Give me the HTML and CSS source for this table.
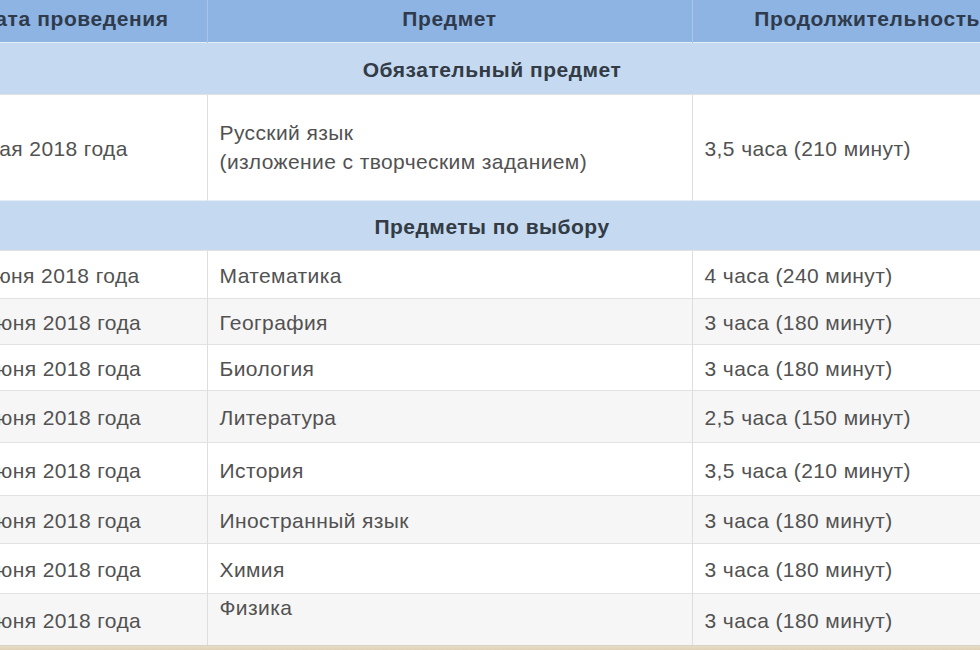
FILE: index.html
```html
<!DOCTYPE html>
<html lang="ru">
<head>
<meta charset="utf-8">
<title>Расписание экзаменов</title>
<link rel="stylesheet" href="styles.css">
</head>
<body>
<div class="frame">
  <table class="schedule">
    <colgroup>
      <col class="c-date">
      <col class="c-subj">
      <col class="c-dur">
    </colgroup>
    <thead>
      <tr class="head">
        <th>Дата проведения</th>
        <th>Предмет</th>
        <th>Продолжительность</th>
      </tr>
    </thead>
    <tbody>
      <tr class="section s1"><td colspan="3">Обязательный предмет</td></tr>
      <tr class="tall">
        <td>31 мая 2018 года</td>
        <td class="two">Русский язык<br>(изложение с творческим заданием)</td>
        <td>3,5 часа (210 минут)</td>
      </tr>
      <tr class="section s2"><td colspan="3">Предметы по выбору</td></tr>
      <tr class="r48"><td>11 июня 2018 года</td><td>Математика</td><td>4 часа (240 минут)</td></tr>
      <tr class="r46 alt"><td>13 июня 2018 года</td><td>География</td><td>3 часа (180 минут)</td></tr>
      <tr class="r46"><td>13 июня 2018 года</td><td>Биология</td><td>3 часа (180 минут)</td></tr>
      <tr class="r52 alt"><td>15 июня 2018 года</td><td>Литература</td><td>2,5 часа (150 минут)</td></tr>
      <tr class="r53"><td>15 июня 2018 года</td><td>История</td><td>3,5 часа (210 минут)</td></tr>
      <tr class="r48 alt"><td>18 июня 2018 года</td><td>Иностранный язык</td><td>3 часа (180 минут)</td></tr>
      <tr class="r50"><td>18 июня 2018 года</td><td>Химия</td><td>3 часа (180 минут)</td></tr>
      <tr class="r52 alt last"><td>18 июня 2018 года</td><td class="top">Физика</td><td>3 часа (180 минут)</td></tr>
    </tbody>
  </table>
  <div class="strip"></div>
</div>
</body>
</html>
```

FILE: styles.css
```css
html, body {
  margin: 0;
  padding: 0;
  background: #ffffff;
}

.frame {
  width: 980px;
  height: 650px;
  overflow: hidden;
  position: relative;
  background: #ffffff;
}

.schedule {
  margin-left: -58px;
  width: 1100px;
  border-collapse: collapse;
  table-layout: fixed;
  font-family: "Liberation Sans", Arial, sans-serif;
  font-size: 21px;
  letter-spacing: 0.4px;
  color: #525252;
}

.c-date { width: 265px; }
.c-subj { width: 485px; }
.c-dur { width: 350px; }

.head {
  height: 42px;
  background: #8eb4e3;
}

.head th {
  font-weight: bold;
  font-size: 21px;
  letter-spacing: 0.6px;
  color: #2f3b4c;
  text-align: center;
  padding: 0 0 3px;
  border-left: 1px solid #a9c6ea;
  white-space: nowrap;
}

.head th:first-child { border-left: none; }

.section {
  background: #c5d9f0;
}

.section td {
  text-align: center;
  font-weight: bold;
  letter-spacing: 0.5px;
  color: #333b45;
  padding: 3px 0 0;
}

.s1 { height: 52px; }
.s2 { height: 50px; }

tbody td {
  padding: 4px 12px 0;
  border-top: 1px solid #e2e2e2;
  border-left: 1px solid #dedede;
  vertical-align: middle;
  white-space: nowrap;
}

tbody td:first-child { border-left: none; }

.section td { border-left: none; border-top: 1px solid #e6edf6; }

.tall { height: 106px; }
.two { line-height: 29px; padding-bottom: 4px; }

.r46 { height: 46px; }
.r48 { height: 48px; }
.r50 { height: 50px; }
.r52 { height: 52px; }
.r53 { height: 53px; }

.alt { background: #f6f6f6; }

.top {
  vertical-align: top;
  padding-top: 2px;
}

.last td { border-bottom: 1px solid #d8d3c8; }

.strip {
  height: 8px;
  background: linear-gradient(#e8dcc6, #d6c6a8);
}
```
